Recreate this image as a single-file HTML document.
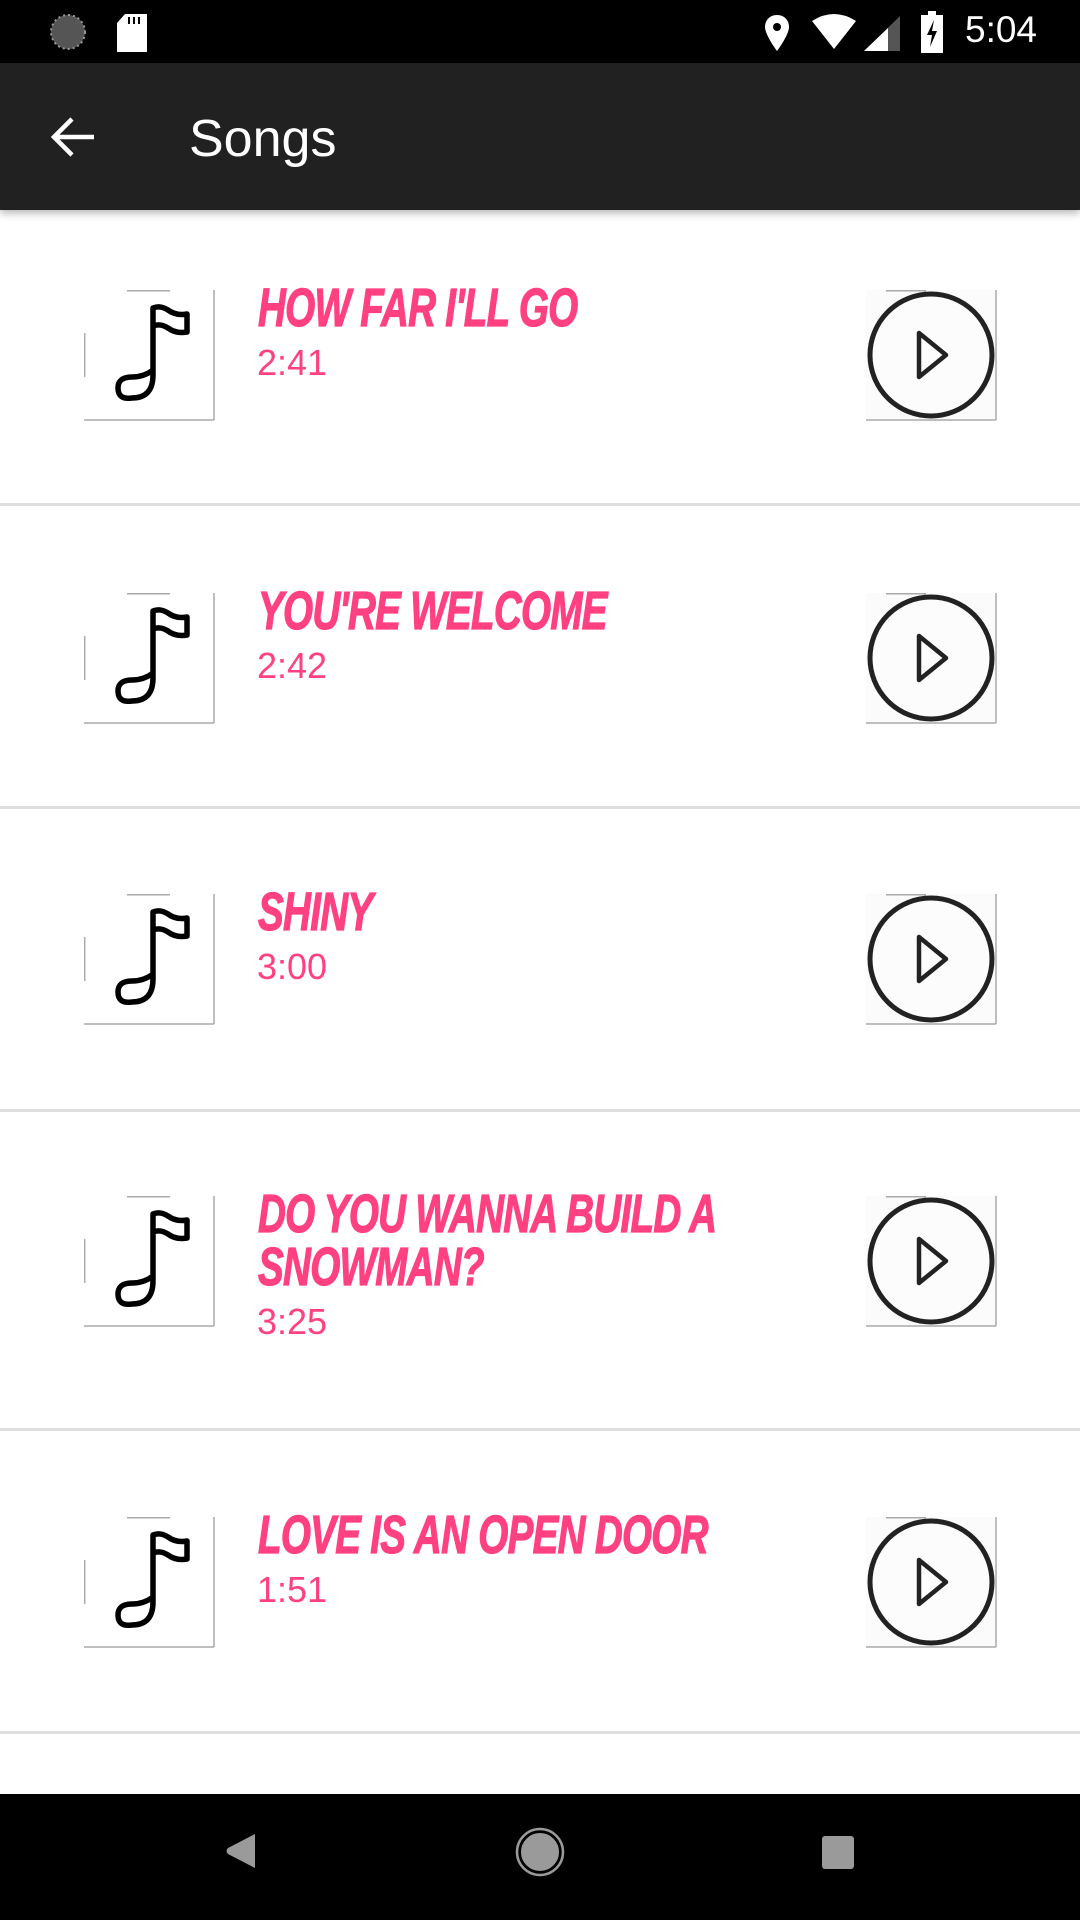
<!DOCTYPE html>
<html><head><meta charset="utf-8"><style>
*{margin:0;padding:0;box-sizing:border-box}
body{width:1080px;height:1920px;position:relative;background:#fff;font-family:"Liberation Sans",sans-serif;overflow:hidden}
.abs{position:absolute}
.sb{left:0;top:0;width:1080px;height:63px;background:#000}
.tb{left:0;top:63px;width:1080px;height:147px;background:#212121;box-shadow:0 3px 8px rgba(0,0,0,.3);z-index:2}
.sep{left:0;width:1080px;height:3px;background:#dedede}
.title{left:258px;color:#ff4081;font-weight:bold;font-style:italic;font-size:54px;line-height:53px;transform:scaleX(.715);transform-origin:0 0;white-space:nowrap;letter-spacing:-1px;-webkit-text-stroke:1.2px #ff4081}
.time{left:257px;color:#ff4081;font-size:36px}
.nav{left:0;top:1794px;width:1080px;height:126px;background:#000}
</style></head><body>
<div class="abs sb">
 <svg class="abs" style="left:48px;top:12px" width="40" height="40"><circle cx="20" cy="20" r="17" fill="#555" stroke="#999" stroke-width="2" stroke-dasharray="2 3"/></svg>
 <svg class="abs" style="left:115px;top:13px" width="34" height="40"><path d="M10 1H32V39H2V10Z" fill="#fff"/><path d="M14 4v7M19 4v7M24 4v7" stroke="#000" stroke-width="2"/></svg>
 <svg class="abs" style="left:762px;top:13px" width="30" height="40"><path d="M15 2C7 2 3 8 3 14C3 22 15 38 15 38C15 38 27 22 27 14C27 8 23 2 15 2Z" fill="#fff"/><circle cx="15" cy="14" r="4" fill="#000"/></svg>
 <svg class="abs" style="left:810px;top:13px" width="48" height="38"><path d="M2 8Q24 -6 46 8L24 36Z" fill="#fff"/></svg>
 <svg class="abs" style="left:864px;top:16px" width="38" height="36"><path d="M36 0V35H0Z" fill="#555"/><path d="M24 12V35H0Z" fill="#fff"/></svg>
 <svg class="abs" style="left:920px;top:11px" width="24" height="42"><rect x="8" y="0" width="8" height="4" fill="#fff"/><rect x="1" y="4" width="22" height="38" fill="#fff"/><path d="M14 9L7 24H12L10 36L17 20H12Z" fill="#000"/></svg>
 <div class="abs" style="left:965px;top:9px;color:#fff;font-size:37px">5:04</div>
</div>
<div class="abs tb">
 <svg class="abs" style="left:50px;top:53px" width="46" height="42"><path d="M44 21H4M22 3L4 21L22 39" stroke="#fff" stroke-width="4.5" fill="none"/></svg>
 <div class="abs" style="left:189px;top:46px;color:#fff;font-size:52px">Songs</div>
</div>

<svg class="abs" style="left:84px;top:290px" width="131" height="131" viewBox="0 0 131 131"><g stroke="#aaa" stroke-width="1.5" fill="none"><path d="M43 0.7H86M130 0V130M0 130H130M0.7 43V87"/></g><path d="M69 85V18Q76 15 84 20Q92 26 103 24V42Q92 44 84 38Q76 33 69 36M69 85Q69 108 48 108Q34 110 34 98Q34 87 48 87Q60 87 69 80" stroke="#000" stroke-width="5.5" fill="none" stroke-linejoin="round"/></svg>
<svg class="abs" style="left:866px;top:290px" width="131" height="131" viewBox="0 0 131 131"><rect x="0" y="0" width="130" height="130" fill="#fbfbfb"/><path d="M130 0V130M0 130H130M20 0.7H60" stroke="#aaa" stroke-width="1.5"/><circle cx="65" cy="65" r="61" fill="#fff" fill-opacity=".4" stroke="#222" stroke-width="5"/><path d="M53 43V87L80 65Z" stroke="#222" stroke-width="4.5" fill="none" stroke-linejoin="round"/></svg>
<div class="abs title" style="top:282px">HOW FAR I'LL GO</div>
<div class="abs time" style="top:342px">2:41</div>
<div class="abs sep" style="top:503px"></div>

<svg class="abs" style="left:84px;top:593px" width="131" height="131" viewBox="0 0 131 131"><g stroke="#aaa" stroke-width="1.5" fill="none"><path d="M43 0.7H86M130 0V130M0 130H130M0.7 43V87"/></g><path d="M69 85V18Q76 15 84 20Q92 26 103 24V42Q92 44 84 38Q76 33 69 36M69 85Q69 108 48 108Q34 110 34 98Q34 87 48 87Q60 87 69 80" stroke="#000" stroke-width="5.5" fill="none" stroke-linejoin="round"/></svg>
<svg class="abs" style="left:866px;top:593px" width="131" height="131" viewBox="0 0 131 131"><rect x="0" y="0" width="130" height="130" fill="#fbfbfb"/><path d="M130 0V130M0 130H130M20 0.7H60" stroke="#aaa" stroke-width="1.5"/><circle cx="65" cy="65" r="61" fill="#fff" fill-opacity=".4" stroke="#222" stroke-width="5"/><path d="M53 43V87L80 65Z" stroke="#222" stroke-width="4.5" fill="none" stroke-linejoin="round"/></svg>
<div class="abs title" style="top:585px">YOU'RE WELCOME</div>
<div class="abs time" style="top:645px">2:42</div>
<div class="abs sep" style="top:806px"></div>

<svg class="abs" style="left:84px;top:894px" width="131" height="131" viewBox="0 0 131 131"><g stroke="#aaa" stroke-width="1.5" fill="none"><path d="M43 0.7H86M130 0V130M0 130H130M0.7 43V87"/></g><path d="M69 85V18Q76 15 84 20Q92 26 103 24V42Q92 44 84 38Q76 33 69 36M69 85Q69 108 48 108Q34 110 34 98Q34 87 48 87Q60 87 69 80" stroke="#000" stroke-width="5.5" fill="none" stroke-linejoin="round"/></svg>
<svg class="abs" style="left:866px;top:894px" width="131" height="131" viewBox="0 0 131 131"><rect x="0" y="0" width="130" height="130" fill="#fbfbfb"/><path d="M130 0V130M0 130H130M20 0.7H60" stroke="#aaa" stroke-width="1.5"/><circle cx="65" cy="65" r="61" fill="#fff" fill-opacity=".4" stroke="#222" stroke-width="5"/><path d="M53 43V87L80 65Z" stroke="#222" stroke-width="4.5" fill="none" stroke-linejoin="round"/></svg>
<div class="abs title" style="top:886px">SHINY</div>
<div class="abs time" style="top:946px">3:00</div>
<div class="abs sep" style="top:1109px"></div>

<svg class="abs" style="left:84px;top:1196px" width="131" height="131" viewBox="0 0 131 131"><g stroke="#aaa" stroke-width="1.5" fill="none"><path d="M43 0.7H86M130 0V130M0 130H130M0.7 43V87"/></g><path d="M69 85V18Q76 15 84 20Q92 26 103 24V42Q92 44 84 38Q76 33 69 36M69 85Q69 108 48 108Q34 110 34 98Q34 87 48 87Q60 87 69 80" stroke="#000" stroke-width="5.5" fill="none" stroke-linejoin="round"/></svg>
<svg class="abs" style="left:866px;top:1196px" width="131" height="131" viewBox="0 0 131 131"><rect x="0" y="0" width="130" height="130" fill="#fbfbfb"/><path d="M130 0V130M0 130H130M20 0.7H60" stroke="#aaa" stroke-width="1.5"/><circle cx="65" cy="65" r="61" fill="#fff" fill-opacity=".4" stroke="#222" stroke-width="5"/><path d="M53 43V87L80 65Z" stroke="#222" stroke-width="4.5" fill="none" stroke-linejoin="round"/></svg>
<div class="abs title" style="top:1188px">DO YOU WANNA BUILD A<br>SNOWMAN?</div>
<div class="abs time" style="top:1301px">3:25</div>
<div class="abs sep" style="top:1428px"></div>

<svg class="abs" style="left:84px;top:1517px" width="131" height="131" viewBox="0 0 131 131"><g stroke="#aaa" stroke-width="1.5" fill="none"><path d="M43 0.7H86M130 0V130M0 130H130M0.7 43V87"/></g><path d="M69 85V18Q76 15 84 20Q92 26 103 24V42Q92 44 84 38Q76 33 69 36M69 85Q69 108 48 108Q34 110 34 98Q34 87 48 87Q60 87 69 80" stroke="#000" stroke-width="5.5" fill="none" stroke-linejoin="round"/></svg>
<svg class="abs" style="left:866px;top:1517px" width="131" height="131" viewBox="0 0 131 131"><rect x="0" y="0" width="130" height="130" fill="#fbfbfb"/><path d="M130 0V130M0 130H130M20 0.7H60" stroke="#aaa" stroke-width="1.5"/><circle cx="65" cy="65" r="61" fill="#fff" fill-opacity=".4" stroke="#222" stroke-width="5"/><path d="M53 43V87L80 65Z" stroke="#222" stroke-width="4.5" fill="none" stroke-linejoin="round"/></svg>
<div class="abs title" style="top:1509px">LOVE IS AN OPEN DOOR</div>
<div class="abs time" style="top:1569px">1:51</div>
<div class="abs sep" style="top:1731px"></div>

<div class="abs nav">
 <svg class="abs" style="left:222px;top:38px" width="40" height="40"><path d="M33 2V36L6 22Q3 19 6 16Z" fill="#9a9a9a"/></svg>
 <svg class="abs" style="left:514px;top:32px" width="52" height="52"><circle cx="26" cy="26" r="22" fill="#9a9a9a" stroke="#000" stroke-width="6"/><circle cx="26" cy="26" r="23" fill="none" stroke="#9a9a9a" stroke-width="2.5"/></svg>
 <svg class="abs" style="left:821px;top:41px" width="34" height="36"><rect x="1" y="1" width="32" height="33" rx="3" fill="#9a9a9a"/></svg>
</div>
</body></html>
